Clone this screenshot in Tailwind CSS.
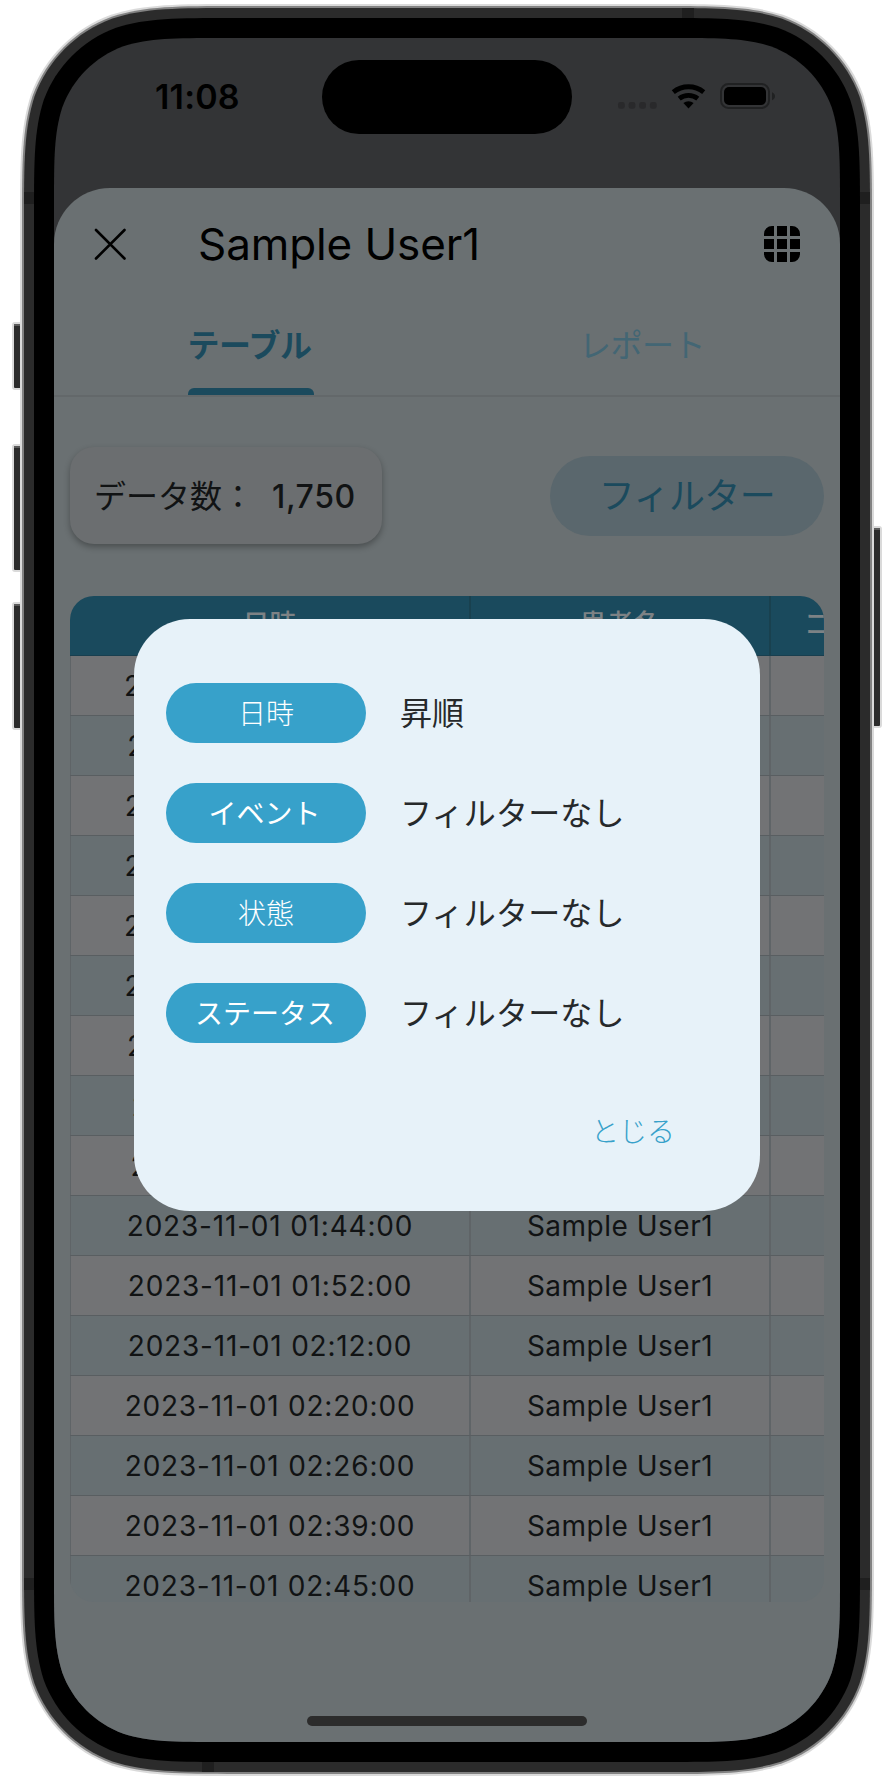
<!DOCTYPE html>
<html lang="ja">
<head>
<meta charset="utf-8">
<title>Sample User1</title>
<script src="https://cdn.jsdelivr.net/npm/@tailwindcss/browser@4"></script>
</head>
<body class="bg-white">
<div class="relative w-[894px] h-[1778px] overflow-hidden pl-[54px] pt-[38px] font-['Inter','Noto_Sans_CJK_JP',sans-serif]">
  <!-- device frame -->
  <svg class="absolute inset-0" width="894" height="1778" viewBox="0 0 894 1778">
    <g fill="#2b2b2b" stroke="#dadada" stroke-width="2">
      <rect x="13" y="323" width="20" height="66" rx="2"/><rect x="13" y="445" width="20" height="126" rx="2"/><rect x="13" y="603" width="20" height="126" rx="2"/>
      <rect x="861" y="527" width="20" height="200" rx="2"/>
    </g>
    <g fill="#5c5c5c"><rect x="14" y="324" width="10" height="2"/><rect x="14" y="446" width="10" height="2"/><rect x="14" y="604" width="10" height="2"/><rect x="870" y="528" width="10" height="2"/></g>
    <path data-ring="20 4 854 1772 144" fill="#dadada"/>
    <path data-ring="22 6 850 1768 142" fill="#828282"/>
    <path data-ring="24 8 846 1764 140" fill="#2b2b2b"/>
    <g fill="#1f1f1f"><rect x="24" y="192" width="10" height="12"/><rect x="860" y="192" width="10" height="12"/><rect x="24" y="1578" width="10" height="12"/><rect x="860" y="1578" width="10" height="12"/><rect x="682" y="8" width="12" height="10"/><rect x="202" y="1762" width="12" height="10"/></g>
    <path data-ring="34 18 826 1744 130" fill="#000"/>
  </svg>

  <!-- screen -->
  <div id="screen" class="relative w-[786px] h-[1704px] bg-[#333436] overflow-hidden flex flex-col">
    <div class="h-[150px] shrink-0 flex items-start">
      <div class="w-[268px] pt-[38px] pl-[101px] text-[34px] leading-[42px] font-semibold text-black tracking-[0.2px]">11:08</div>
      <div class="mt-[22px] w-[250px] h-[74px] rounded-full bg-black"></div>
      <svg class="mt-[40px] ml-[40px]" width="170" height="36" viewBox="612 78 170 36">
        <g fill="#29292b"><rect x="618" y="102" width="6.8" height="6.8" rx="2.4"/><rect x="628.6" y="102" width="6.8" height="6.8" rx="2.4"/><rect x="639.2" y="102" width="6.8" height="6.8" rx="2.4"/><rect x="649.9" y="102" width="6.8" height="6.8" rx="2.4"/></g>
        <g fill="none" stroke="#000" stroke-width="4.8"><path d="M673.3 92.2a24 24 0 0 1 30.4 0"/><path d="M679.2 98.6a15 15 0 0 1 18.6 0"/></g>
        <path d="M683.4 103.1a8 8 0 0 1 10.2 0L688.5 108.6z" fill="#000"/>
        <rect x="721" y="84" width="48" height="24" rx="7.5" fill="none" stroke="#202122" stroke-width="2"/>
        <rect x="724" y="87" width="42" height="18" rx="5" fill="#000"/>
        <path d="M772 92.3c4 1.4 4 6.600 0 8z" fill="#202122"/>
      </svg>
    </div>

    <div class="flex-1 bg-[#6a7072] rounded-t-[56px] flex flex-col">
      <header class="h-[112px] flex items-center px-10">
        <svg width="32" height="32" viewBox="0 0 32 32" fill="none" stroke="#000" stroke-width="2.6" stroke-linecap="round"><path d="M2 2l28.500 28.500M30.500 2L2 30.500"/></svg>
        <h1 class="ml-[72px] text-[44px] leading-[56px] text-black font-normal flex-1 whitespace-nowrap tracking-[-0.1px]">Sample User1</h1>
        <svg width="36" height="36" viewBox="0 0 36 36" fill="#000"><path d="M10 0v10H0V8a8 8 0 0 1 8-8zM13 0h10v10H13zM26 0h2a8 8 0 0 1 8 8v2H26zM0 13h10v10H0zM13 13h10v10H13zM26 13h10v10H26zM0 26h10v10H8a8 8 0 0 1-8-8zM13 26h10v10H13zM26 26h10v2a8 8 0 0 1-8 8h-2z"/></svg>
      </header>
      <nav class="h-[97px] flex border-b-2 border-[#63686a] text-[32px] tracking-[-0.5px]">
        <div class="w-[393px] flex flex-col items-center text-[#1b4a5d] font-bold">
          <div class="h-[89px] pt-[26px] pr-[2px] leading-[40px]">テーブル</div>
          <div class="w-[126px] h-[7px] rounded-t-[6px] bg-[#1b4a5d]"></div>
        </div>
        <div class="w-[393px] flex justify-center pt-[26px] pr-[3px] leading-[40px] text-[#436674]">レポート</div>
      </nav>
      <div class="mt-[50px] px-4 flex justify-between items-start">
        <div class="w-[312px] h-[97px] rounded-[24px] bg-[#6b6e70] shadow-[0_3px_6px_rgba(0,0,0,0.3)] flex items-center pt-[2px] pl-[24px] text-[32px] text-[#111314] whitespace-nowrap">
          <span>データ数：</span><span class="ml-[18px] font-medium tracking-[0.6px]">1,750</span>
        </div>
        <div class="mt-[9px] w-[274px] h-[80px] rounded-full bg-[#5a676d] flex items-center justify-center text-[36px] text-[#1b4a5d] pb-px tracking-[-0.6px] whitespace-nowrap">フィルター</div>
      </div>
      <div class="mt-[52px] mx-4 h-[1006px] rounded-[24px] overflow-hidden text-[28px] text-[#111314]">
        <div class="grid grid-cols-[401px_300px_200px] h-[60px] bg-[#1a4a5d] text-[#7d8285] font-medium text-[27px] border-b border-[#193f4f]">
          <div class="flex items-center justify-center border-r-2 border-[#19414f]">日時</div>
          <div class="flex items-center justify-center border-r-2 border-[#19414f]">患者名</div>
          <div class="flex items-center pl-[33px]">コメント</div>
        </div>
        <div id="rows"></div>
      </div>
    </div>

    <!-- home indicator -->
    <div class="absolute left-[253px] top-[1678px] w-[280px] h-[10px] rounded-full bg-[#2c2c2c]"></div>

    <!-- dialog -->
    <div class="absolute left-[80px] top-[581px] w-[626px] h-[592px] rounded-[56px] bg-[#e7f2f9] pt-[64px] px-[32px]">
      <div class="flex flex-col gap-[40px] text-[32px] text-[#26292b] whitespace-nowrap">
        <div class="flex items-center h-[60px]"><div class="shrink-0 w-[200px] h-[60px] rounded-full bg-[#37a1ca] text-white text-[28px] font-light flex items-center justify-center pt-px">日時</div><span class="ml-[34px] pt-[2px]">昇順</span></div>
        <div class="flex items-center h-[60px]"><div class="shrink-0 w-[200px] h-[60px] rounded-full bg-[#37a1ca] text-white text-[28px] flex items-center justify-center pt-px pr-[3px]">イベント</div><span class="ml-[34px] pt-[2px] tracking-[0.2px]">フィルターなし</span></div>
        <div class="flex items-center h-[60px]"><div class="shrink-0 w-[200px] h-[60px] rounded-full bg-[#37a1ca] text-white text-[28px] font-light flex items-center justify-center pt-px">状態</div><span class="ml-[34px] pt-[2px] tracking-[0.2px]">フィルターなし</span></div>
        <div class="flex items-center h-[60px]"><div class="shrink-0 w-[200px] h-[60px] rounded-full bg-[#37a1ca] text-white text-[28px] flex items-center justify-center pt-px pr-[2px]">ステータス</div><span class="ml-[34px] pt-[2px] tracking-[0.2px]">フィルターなし</span></div>
      </div>
      <div class="mt-[68px] pr-[53px] text-right text-[28px] leading-[42px] text-[#37a1ca] font-light">とじる</div>
    </div>
  </div>
</div>
<script>
  // Continuous-curvature rounded rectangle
  function ring(x, y, w, h, r) {
    const X = x + w, Y = y + h, a = 1.52866 * r, b = 1.08849 * r, c = .86841 * r, d = .63149 * r, e = .07491 * r, f = .37282 * r, g = .16906 * r;
    return `M${x + a} ${y}L${X - a} ${y}C${X - b} ${y} ${X - c} ${y} ${X - d} ${y + e}C${X - f} ${y + g} ${X - g} ${y + f} ${X - e} ${y + d}C${X} ${y + c} ${X} ${y + b} ${X} ${y + a}` +
      `L${X} ${Y - a}C${X} ${Y - b} ${X} ${Y - c} ${X - e} ${Y - d}C${X - g} ${Y - f} ${X - f} ${Y - g} ${X - d} ${Y - e}C${X - c} ${Y} ${X - b} ${Y} ${X - a} ${Y}` +
      `L${x + a} ${Y}C${x + b} ${Y} ${x + c} ${Y} ${x + d} ${Y - e}C${x + f} ${Y - g} ${x + g} ${Y - f} ${x + e} ${Y - d}C${x} ${Y - c} ${x} ${Y - b} ${x} ${Y - a}` +
      `L${x} ${y + a}C${x} ${y + b} ${x} ${y + c} ${x + e} ${y + d}C${x + g} ${y + f} ${x + f} ${y + g} ${x + d} ${y + e}C${x + c} ${y} ${x + b} ${y} ${x + a} ${y}Z`;
  }
  document.querySelectorAll('[data-ring]').forEach(p => p.setAttribute('d', ring(...p.dataset.ring.split(' ').map(Number))));
  document.getElementById('screen').style.clipPath = `path('${ring(0, 0, 786, 1704, 110)}')`;

  const times = ['00:00', '00:10', '00:22', '00:35', '00:48', '00:56', '01:04', '01:17', '01:31', '01:44', '01:52', '02:12', '02:20', '02:26', '02:39', '02:45'];
  document.getElementById('rows').innerHTML = times.map((t, i) => `
    <div class="grid grid-cols-[401px_300px_200px] h-[60px] leading-[61px] text-center border-b border-[#595e61] ${i % 2 ? 'bg-[#676f72]' : 'bg-[#727375]'}">
      <div class="h-[59px] border-r-2 border-l border-[#5f6467] tracking-[0.8px]">2023-11-01 ${t}:00</div>
      <div class="h-[59px] border-r-2 border-[#5f6467] tracking-[0.5px]">Sample User1</div>
      <div></div>
    </div>`).join('');
</script>
</body>
</html>
